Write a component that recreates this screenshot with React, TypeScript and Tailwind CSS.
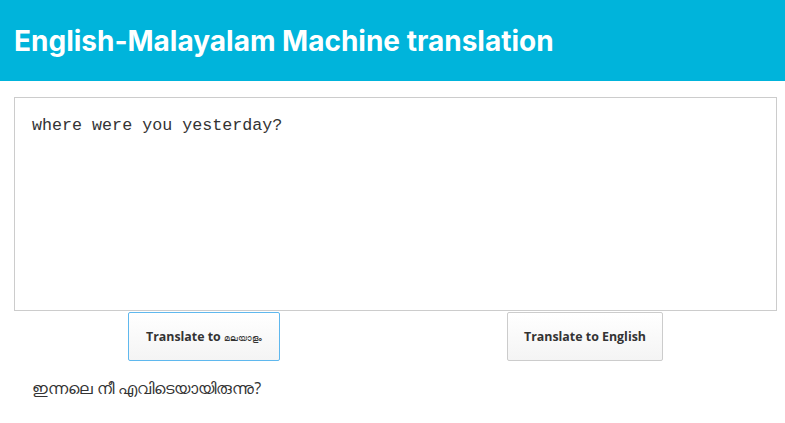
import React from "react";

const App: React.FC = () => {
  return (
    <div className="min-h-screen bg-white" style={{ fontFamily: "'Open Sans', sans-serif" }}>
      {/* Header */}
      <div className="bg-[#00b4db] h-[81px] flex items-center px-[14px]">
        <h1 className="text-white font-bold text-[28px] font-['Inter',sans-serif]">
          English-Malayalam Machine translation
        </h1>
      </div>

      <div className="px-[14px] pt-[16px]">
        <textarea
          defaultValue="where were you yesterday?"
          className="block w-[763px] h-[214px] border border-[#cccccc] px-[17px] py-[15px] resize-none outline-none text-[16.7px] text-[#333] font-['Liberation_Mono',monospace]"
        />

        <div className="flex mt-[1px]">
          <button className="ml-[114px] h-[49px] w-[152px] pt-[1px] border border-[#5fb8ee] rounded-[2px] bg-gradient-to-b from-white to-[#f4f4f4] text-[12.4px] font-bold text-[#333] font-['Open_Sans',sans-serif]">
            Translate to <span className="text-[9px] font-normal">മലയാളം</span>
          </button>
          <button className="ml-[227px] h-[49px] w-[156px] pt-[1px] border border-[#cccccc] rounded-[2px] bg-gradient-to-b from-white to-[#f4f4f4] text-[12.4px] font-bold text-[#333] font-['Open_Sans',sans-serif]">
            Translate to English
          </button>
        </div>

        <p className="mt-[15px] pl-[18px] text-[16.1px] text-[#333]">
          ഇന്നലെ നീ എവിടെയായിരുന്നു?
        </p>
      </div>
    </div>
  );
};

export default App;
